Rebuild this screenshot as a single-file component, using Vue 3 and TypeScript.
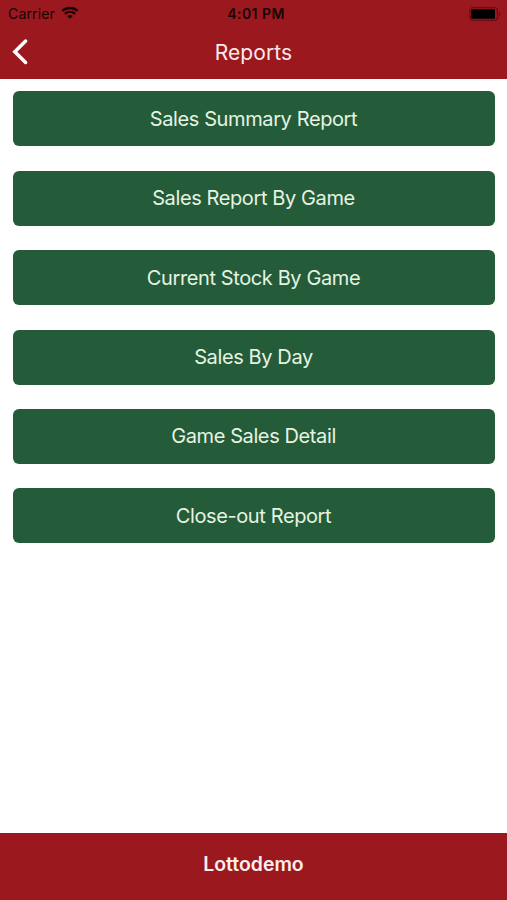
<script setup lang="ts">
const reports: string[] = [
  'Sales Summary Report',
  'Sales Report By Game',
  'Current Stock By Game',
  'Sales By Day',
  'Game Sales Detail',
  'Close-out Report',
]
</script>

<template>
  <div class="screen">
    <header class="header">
      <div class="status">
        <div class="carrier">
          <span>Carrier</span>
          <svg class="wifi" width="18" height="14" viewBox="0 0 18 14">
            <path d="M1.3 5C5.6 1 12.4 1 16.7 5M3.9 7.8c3-2.6 7.2-2.6 10.2 0" fill="none" stroke="#180304" stroke-width="2.3" />
            <path d="M6.2 10c1.6-1.4 4-1.4 5.6 0L9 12.8z" fill="#180304" />
          </svg>
        </div>
        <span class="time">4:01 PM</span>
        <svg class="battery" width="32" height="14" viewBox="0 0 32 14">
          <rect x=".7" y=".7" width="27.8" height="12.6" rx="3" fill="none" stroke="#650f13" stroke-width="1.2" />
          <rect x="2.2" y="2.3" width="23.8" height="9.4" rx="1.2" />
          <path d="M30 5c1.9.7 1.9 3.5 0 4.2z" fill="#650f13" />
        </svg>
      </div>
      <div class="nav">
        <svg class="back" width="18" height="28" viewBox="0 0 18 28">
          <path d="M14.6 3 3.8 13.7l10.8 10.8" fill="none" stroke="#fff" stroke-width="3.5" stroke-linecap="round" />
        </svg>
        <h1>Reports</h1>
      </div>
    </header>
    <main class="list">
      <button v-for="r in reports" :key="r" class="report" type="button">{{ r }}</button>
    </main>
    <footer class="footer">Lottodemo</footer>
  </div>
</template>

<style>
body { margin: 0; background: #fff; }
</style>
<style scoped>
.screen { width: 507px; height: 900px; display: flex; flex-direction: column; font-family: Inter, "Liberation Sans", sans-serif; background: #fff; }
.header { height: 78.5px; background: #9b191e; }
.status { height: 27px; display: grid; grid-template-columns: 1fr auto 1fr; align-items: center; padding: 0 6px 0 8px; font-size: 14px; color: #180304; }
.carrier { display: flex; align-items: center; gap: 6px; letter-spacing: .15px; }
.wifi { margin-bottom: 1px; }
.time { font-weight: 600; letter-spacing: .45px; padding-left: 3px; }
.battery { justify-self: end; }
.nav { height: 50px; display: grid; grid-template-columns: 40px 1fr 40px; align-items: center; }
.back { margin-left: 11px; }
h1 { margin: 0; text-align: center; font-size: 21px; font-weight: 400; letter-spacing: .1px; color: #fbe9e9; }
.list { flex: 1; display: flex; flex-direction: column; gap: 24.4px; padding: 12.9px 12.5px; }
.report { height: 55px; flex: none; padding: 0; border: 0; border-radius: 6px; background: #245c39; color: #e6f3e3; font-family: inherit; font-size: 20px; letter-spacing: -.39px; }
.footer { height: 67px; display: flex; align-items: center; justify-content: center; padding-bottom: 6px; box-sizing: border-box; background: #9b191e; color: #fdeeee; font-size: 19.4px; font-weight: 600; }
</style>
